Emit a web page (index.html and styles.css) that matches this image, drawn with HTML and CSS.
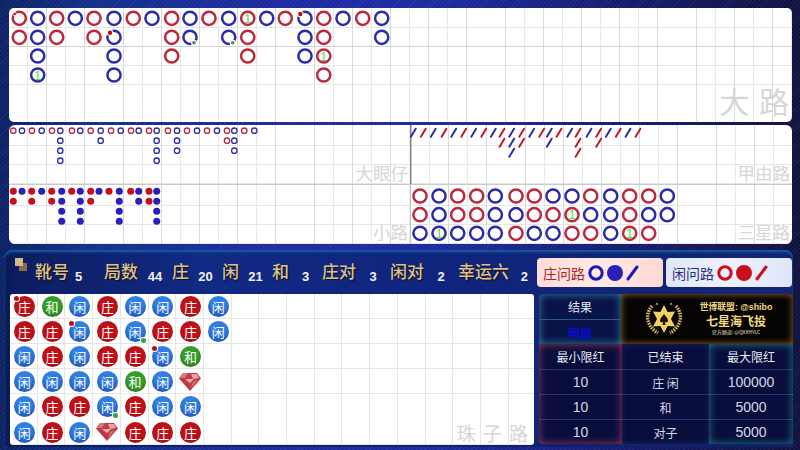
FILE: index.html
```html
<!DOCTYPE html>
<html>
<head>
<meta charset="UTF-8">
<meta name="viewport" content="width=device-width, initial-scale=1">
<title>路单</title>
<link rel="stylesheet" href="styles.css">
</head>
<body>

<svg class="defs" width="0" height="0">
	<defs>
		<circle id="r" class="ring red" r="6.6"/>
		<circle id="b" class="ring blue" r="6.6"/>
		<circle id="er" class="eye red" r="2.7"/>
		<circle id="eb" class="eye blue" r="2.7"/>
		<circle id="sr" class="spot red" r="3.5"/>
		<circle id="sb" class="spot blue" r="3.5"/>
		<line id="jr" class="slash red" x1="-2.4" y1="4" x2="2.4" y2="-4"/>
		<line id="jb" class="slash blue" x1="-2.4" y1="4" x2="2.4" y2="-4"/>
		<g id="gem">
			<polygon points="4,0 18,0 22,5.5 11,18 0,5.5" fill="#c03c48"/>
			<polygon points="4,0 9,0 6,5 1,5" fill="#d8787e"/>
			<polygon points="12,1 18,1 20,5 14,6" fill="#e6a4a6"/>
			<polygon points="6,6 15,6 11,10" fill="#e8b0b0"/>
			<polygon points="3,7 8,11 10,15" fill="#a92c3a"/>
			<polygon points="14,9 19,7 12,15" fill="#d87078"/>
		</g>
	</defs>
</svg>

<div class="big-road lines">
	<svg class="marks" viewBox="9 8 783 114" width="783" height="114">
		<use href="#r" x="19.3" y="18.3"/><use href="#b" x="37.7" y="18.3"/><use href="#r" x="56.7" y="18.3"/><use href="#b" x="75.3" y="18.3"/>
		<use href="#r" x="94" y="18.3"/><use href="#b" x="114" y="18.3"/><use href="#r" x="133.3" y="18.3"/><use href="#b" x="152" y="18.3"/>
		<use href="#r" x="171.7" y="18.3"/><use href="#b" x="190" y="18.3"/><use href="#r" x="209" y="18.3"/><use href="#b" x="228.7" y="18.3"/>
		<use href="#r" x="247.7" y="18.3"/><use href="#b" x="266.7" y="18.3"/><use href="#r" x="285.3" y="18.3"/><use href="#b" x="305" y="18.3"/>
		<use href="#r" x="323.7" y="18.3"/><use href="#b" x="343" y="18.3"/><use href="#r" x="362.7" y="18.3"/><use href="#b" x="381.7" y="18.3"/>

		<use href="#r" x="19.3" y="37.3"/><use href="#b" x="37.7" y="37.3"/><use href="#r" x="56.7" y="37.3"/><use href="#r" x="94" y="37.3"/>
		<use href="#b" x="114" y="37.3"/><use href="#r" x="171.7" y="37.3"/><use href="#b" x="190" y="37.3"/><use href="#b" x="228.7" y="37.3"/>
		<use href="#r" x="247.7" y="37.3"/><use href="#b" x="305" y="37.3"/><use href="#r" x="323.7" y="37.3"/><use href="#b" x="381.7" y="37.3"/>

		<use href="#b" x="37.7" y="56"/><use href="#b" x="114" y="56"/><use href="#r" x="171.7" y="56"/><use href="#r" x="247.7" y="56"/>
		<use href="#b" x="305" y="56"/><use href="#r" x="323.7" y="56"/>

		<use href="#b" x="37.7" y="75"/><use href="#b" x="114" y="75"/><use href="#r" x="323.7" y="75"/>

		<!-- pair markers cut a notch out of the ring -->
		<circle class="notch" cx="14.7" cy="14" r="2"/><circle class="pair-r" cx="14.7" cy="14" r="1.3"/>
		<circle class="notch" cx="110" cy="32.7" r="3.2"/><circle class="pair-r" cx="110" cy="32.7" r="2.2"/>
		<circle class="notch" cx="300.3" cy="14" r="3.2"/><circle class="pair-r" cx="300.3" cy="14" r="2.2"/>
		<circle class="notch" cx="194" cy="42.7" r="3"/><circle class="pair-g" cx="194" cy="42.7" r="1.8"/>
		<circle class="notch" cx="232.7" cy="42.7" r="3"/><circle class="pair-g" cx="232.7" cy="42.7" r="1.8"/>

		<text class="tie" x="247.7" y="23">1</text>
		<text class="tie" x="37.7" y="79.6">1</text>
		<text class="tie" x="323.7" y="60.6">1</text>
	</svg>
	<span class="wm wm-big">大 路</span>
</div>

<div class="mid">
	<div class="road lines">
		<svg class="marks" viewBox="9 125 401 59" width="401" height="59">
			<use href="#er" x="13.3" y="130.7"/><use href="#eb" x="22" y="130.7"/><use href="#er" x="32" y="130.7"/><use href="#eb" x="41.7" y="130.7"/>
			<use href="#er" x="52" y="130.7"/><use href="#eb" x="60.3" y="130.7"/><use href="#er" x="72" y="130.7"/><use href="#eb" x="80.3" y="130.7"/>
			<use href="#er" x="90.7" y="130.7"/><use href="#eb" x="100.7" y="130.7"/><use href="#er" x="111" y="130.7"/><use href="#eb" x="120.7" y="130.7"/>
			<use href="#er" x="131" y="130.7"/><use href="#eb" x="138.7" y="130.7"/><use href="#er" x="149" y="130.7"/><use href="#eb" x="156.7" y="130.7"/>
			<use href="#er" x="168" y="130.7"/><use href="#eb" x="177" y="130.7"/><use href="#er" x="187" y="130.7"/><use href="#eb" x="197" y="130.7"/>
			<use href="#er" x="207" y="130.7"/><use href="#eb" x="217" y="130.7"/><use href="#er" x="227" y="130.7"/><use href="#eb" x="234.3" y="130.7"/>
			<use href="#er" x="244.3" y="130.7"/><use href="#eb" x="254.3" y="130.7"/>

			<use href="#eb" x="60.3" y="140.7"/><use href="#eb" x="100.7" y="140.7"/><use href="#eb" x="156.7" y="140.7"/><use href="#eb" x="177" y="140.7"/>
			<use href="#er" x="227" y="140.7"/><use href="#eb" x="234.3" y="140.7"/>

			<use href="#eb" x="60.3" y="150.7"/><use href="#eb" x="156.7" y="150.7"/><use href="#eb" x="177" y="150.7"/><use href="#eb" x="234.3" y="150.7"/>

			<use href="#eb" x="60.3" y="160.7"/><use href="#eb" x="156.7" y="160.7"/>
		</svg>
		<span class="wm">大眼仔</span>
	</div>
	<div class="road lines shift divider">
		<svg class="marks" viewBox="410 125 382 59" width="382" height="59">
			<use href="#jb" x="413.3" y="132.7"/><use href="#jr" x="423.3" y="132.7"/><use href="#jb" x="433.3" y="132.7"/><use href="#jr" x="444" y="132.7"/>
			<use href="#jb" x="453.7" y="132.7"/><use href="#jr" x="463.7" y="132.7"/><use href="#jb" x="473.7" y="132.7"/><use href="#jr" x="483.7" y="132.7"/>
			<use href="#jb" x="493.3" y="132.7"/><use href="#jr" x="502" y="132.7"/><use href="#jb" x="511.7" y="132.7"/><use href="#jr" x="521.7" y="132.7"/>
			<use href="#jb" x="531.7" y="132.7"/><use href="#jr" x="541.7" y="132.7"/><use href="#jb" x="549.3" y="132.7"/><use href="#jr" x="559" y="132.7"/>
			<use href="#jb" x="569.7" y="132.7"/><use href="#jr" x="578" y="132.7"/><use href="#jb" x="589" y="132.7"/><use href="#jr" x="598.7" y="132.7"/>
			<use href="#jb" x="608.3" y="132.7"/><use href="#jr" x="618.3" y="132.7"/><use href="#jb" x="628" y="132.7"/><use href="#jr" x="638" y="132.7"/>

			<use href="#jr" x="502" y="142.7"/><use href="#jb" x="511.7" y="142.7"/><use href="#jr" x="521.7" y="142.7"/><use href="#jb" x="549.3" y="142.7"/>
			<use href="#jr" x="578" y="142.7"/><use href="#jr" x="598.7" y="142.7"/>

			<use href="#jb" x="511.7" y="152.7"/><use href="#jr" x="578" y="152.7"/>
		</svg>
		<span class="wm">甲由路</span>
	</div>
	<div class="road lines low">
		<svg class="marks" viewBox="9 185 401 59" width="401" height="59">
			<use href="#sr" x="13.3" y="191.3"/><use href="#sb" x="22" y="191.3"/><use href="#sr" x="31.7" y="191.3"/><use href="#sb" x="41.7" y="191.3"/>
			<use href="#sr" x="51.7" y="191.3"/><use href="#sb" x="61.7" y="191.3"/><use href="#sr" x="71.7" y="191.3"/><use href="#sb" x="80.3" y="191.3"/>
			<use href="#sr" x="90.7" y="191.3"/><use href="#sb" x="99" y="191.3"/><use href="#sr" x="109" y="191.3"/><use href="#sb" x="119.3" y="191.3"/>
			<use href="#sr" x="130.7" y="191.3"/><use href="#sb" x="138.7" y="191.3"/><use href="#sr" x="149" y="191.3"/><use href="#sb" x="156.7" y="191.3"/>

			<use href="#sr" x="13.3" y="201.3"/><use href="#sr" x="31.7" y="201.3"/><use href="#sr" x="51.7" y="201.3"/><use href="#sb" x="61.7" y="201.3"/>
			<use href="#sb" x="80.3" y="201.3"/><use href="#sr" x="90.7" y="201.3"/><use href="#sb" x="119.3" y="201.3"/><use href="#sb" x="138.7" y="201.3"/>
			<use href="#sr" x="149" y="201.3"/><use href="#sb" x="156.7" y="201.3"/>

			<use href="#sb" x="61.7" y="211.3"/><use href="#sb" x="80.3" y="211.3"/><use href="#sb" x="119.3" y="211.3"/><use href="#sb" x="156.7" y="211.3"/>
			<use href="#sb" x="61.7" y="221.3"/><use href="#sb" x="80.3" y="221.3"/><use href="#sb" x="119.3" y="221.3"/><use href="#sb" x="156.7" y="221.3"/>
		</svg>
		<span class="wm">小路</span>
	</div>
	<div class="road lines shift low divider-soft">
		<svg class="marks" viewBox="410 185 382 59" width="382" height="59">
			<use href="#r" x="420" y="196"/><use href="#b" x="439" y="196"/><use href="#r" x="457.7" y="196"/><use href="#r" x="476.7" y="196"/>
			<use href="#b" x="495.3" y="196"/><use href="#r" x="516" y="196"/><use href="#r" x="534.3" y="196"/><use href="#b" x="553" y="196"/>
			<use href="#b" x="572" y="196"/><use href="#r" x="590.7" y="196"/><use href="#b" x="610.7" y="196"/><use href="#r" x="629.7" y="196"/>
			<use href="#r" x="648.7" y="196"/><use href="#b" x="667.3" y="196"/>

			<use href="#r" x="420" y="214.7"/><use href="#b" x="439" y="214.7"/><use href="#r" x="457.7" y="214.7"/><use href="#r" x="476.7" y="214.7"/>
			<use href="#b" x="495.3" y="214.7"/><use href="#b" x="516" y="214.7"/><use href="#r" x="534.3" y="214.7"/><use href="#r" x="553" y="214.7"/>
			<use href="#r" x="572" y="214.7"/><use href="#b" x="590.7" y="214.7"/><use href="#b" x="610.7" y="214.7"/><use href="#r" x="629.7" y="214.7"/>
			<use href="#b" x="648.7" y="214.7"/><use href="#b" x="667.3" y="214.7"/>

			<use href="#b" x="420" y="233.3"/><use href="#b" x="439" y="233.3"/><use href="#b" x="457.7" y="233.3"/><use href="#b" x="476.7" y="233.3"/>
			<use href="#b" x="495.3" y="233.3"/><use href="#r" x="516" y="233.3"/><use href="#b" x="534.3" y="233.3"/><use href="#b" x="553" y="233.3"/>
			<use href="#r" x="572" y="233.3"/><use href="#r" x="590.7" y="233.3"/><use href="#b" x="610.7" y="233.3"/><use href="#r" x="629.7" y="233.3"/>
			<use href="#r" x="648.7" y="233.3"/>

			<text class="tie" x="572" y="219.3">1</text>
			<text class="tie" x="439" y="237.9">1</text>
			<text class="tie" x="629.7" y="237.9">1</text>
		</svg>
		<span class="wm">三星路</span>
	</div>
</div>

<div class="board">
	<div class="stats">
		<span class="corner-icon"></span>
		<div class="stat stat-first"><span class="label">靴号</span><span class="num">5</span></div>
		<div class="stat stat-two"><span class="label">局数</span><span class="num">44</span></div>
		<div class="stat stat-one"><span class="label">庄</span><span class="num">20</span></div>
		<div class="stat stat-one"><span class="label">闲</span><span class="num">21</span></div>
		<div class="stat stat-one"><span class="label">和</span><span class="num">3</span></div>
		<div class="stat stat-two"><span class="label">庄对</span><span class="num">3</span></div>
		<div class="stat stat-two"><span class="label">闲对</span><span class="num">2</span></div>
		<div class="stat stat-three"><span class="label">幸运六</span><span class="num">2</span></div>

		<div class="asks">
			<button class="ask ask-banker">庄问路
				<svg width="54" height="18" viewBox="0 0 54 18">
					<circle cx="9" cy="9" r="6.2" class="ask-ring blue"/>
					<circle cx="28" cy="9" r="8" class="spot blue"/>
					<line x1="41" y1="15" x2="50" y2="3" class="ask-slash blue"/>
				</svg>
			</button>
			<button class="ask ask-player">闲问路
				<svg width="54" height="18" viewBox="0 0 54 18">
					<circle cx="9" cy="9" r="6.2" class="ask-ring red"/>
					<circle cx="28" cy="9" r="8" class="spot red"/>
					<line x1="41" y1="15" x2="50" y2="3" class="ask-slash red"/>
				</svg>
			</button>
		</div>
	</div>

	<div class="board-body">
		<div class="beads">
			<span class="bead bead-r">庄<i class="dot dot-r"></i></span><span class="bead bead-r">庄</span><span class="bead bead-b">闲</span><span class="bead bead-b">闲</span><span class="bead bead-b">闲</span><span class="bead bead-b">闲</span>
			<span class="bead bead-g">和</span><span class="bead bead-r">庄</span><span class="bead bead-r">庄</span><span class="bead bead-b">闲</span><span class="bead bead-r">庄</span><span class="bead bead-r">庄</span>
			<span class="bead bead-b">闲</span><span class="bead bead-b">闲<i class="dot dot-r"></i></span><span class="bead bead-b">闲</span><span class="bead bead-b">闲</span><span class="bead bead-r">庄</span><span class="bead bead-b">闲</span>
			<span class="bead bead-r">庄</span><span class="bead bead-r">庄</span><span class="bead bead-r">庄</span><span class="bead bead-b">闲</span><span class="bead bead-b">闲<i class="dot dot-g"></i></span><svg class="gem" viewBox="0 0 22 18"><use href="#gem"/></svg>
			<span class="bead bead-b">闲</span><span class="bead bead-b">闲<i class="dot dot-g"></i></span><span class="bead bead-r">庄</span><span class="bead bead-g">和</span><span class="bead bead-r">庄</span><span class="bead bead-r">庄</span>
			<span class="bead bead-b">闲</span><span class="bead bead-r">庄</span><span class="bead bead-b">闲<i class="dot dot-r"></i></span><span class="bead bead-b">闲</span><span class="bead bead-b">闲</span><span class="bead bead-r">庄</span>
			<span class="bead bead-r">庄</span><span class="bead bead-r">庄</span><span class="bead bead-g">和</span><svg class="gem" viewBox="0 0 22 18"><use href="#gem"/></svg><span class="bead bead-b">闲</span><span class="bead bead-r">庄</span>
			<span class="bead bead-b">闲</span><span class="bead bead-b">闲</span>
			<span class="wm wm-bead">珠 子 路</span>
		</div>

		<div class="info">
			<div class="info-top">
				<div class="result">
					<div class="result-cell">结果</div>
					<div class="result-cell result-win">闲赢</div>
				</div>
				<div class="logo">
					<svg class="emblem" width="38" height="32" viewBox="0 0 38 32">
						<path class="wreath" d="M7 3 C0 11 1 23 13 30"/>
						<path class="wreath" d="M31 3 C38 11 37 23 25 30"/>
						<polygon class="star" points="19,2 22.6,9 30,8.5 26,16 30,23.5 22.6,23 19,30 15.4,23 8,23.5 12,16 8,8.5 15.4,9"/>
						<path d="M19 11 C21 14 23 15 23 17.5 C23 19.5 20.5 20 19.6 18.6 L20.6 22 L17.4 22 L18.4 18.6 C17.5 20 15 19.5 15 17.5 C15 15 17 14 19 11Z" fill="#1a1204"/>
						<circle class="star" cx="12" cy="0.9" r="0.9"/><circle class="star" cx="26" cy="0.9" r="0.9"/>
					</svg>
					<div class="logo-text">
						<div class="logo-line">世博联盟: @shibo</div>
						<div class="logo-name">七星海飞投</div>
						<div class="logo-small">官方频道: @QXXHYLC</div>
					</div>
				</div>
			</div>
			<div class="limits">
				<div class="col col-red">
					<div class="cell cell-head">最小限红</div>
					<div class="cell">10</div>
					<div class="cell">10</div>
					<div class="cell">10</div>
				</div>
				<div class="col col-blue">
					<div class="cell cell-head">已结束</div>
					<div class="cell cell-cn">庄 闲</div>
					<div class="cell cell-cn">和</div>
					<div class="cell cell-cn">对子</div>
				</div>
				<div class="col col-teal">
					<div class="cell cell-head">最大限红</div>
					<div class="cell">100000</div>
					<div class="cell">5000</div>
					<div class="cell">5000</div>
				</div>
			</div>
		</div>
	</div>
</div>

</body>
</html>
```

FILE: styles.css
```css
* {
	box-sizing: border-box;
}

html, body {
	height: 100%;
}

body {
	margin: 0;
	width: 800px;
	height: 450px;
	overflow: hidden;
	display: flex;
	flex-direction: column;
	font-family: "Noto Sans CJK SC", "Liberation Sans", sans-serif;
	background:
		repeating-linear-gradient(135deg, rgba(255,255,255,.05) 0 1px, transparent 1px 3px),
		linear-gradient(to right, #0d2265 0%, #12308a 12%, #1d2aa2 35%, #1c2aa0 55%, #141a68 80%, #10123f 100%);
}

.defs {
	position: absolute;
}

/* grid lines */
.lines {
	position: relative;
	background-color: #fff;
	background-image:
		repeating-linear-gradient(to right, transparent 0 37.2px, #dadada 37.2px 38.2px),
		repeating-linear-gradient(to right, transparent 0 18.1px, #e8e8e8 18.1px 19.1px),
		repeating-linear-gradient(to bottom, transparent 0 18.1px, #e6e6e6 18.1px 19.1px);
}

.big-road {
	flex: none;
	margin: 8px 8px 0 9px;
	height: 114px;
	border-radius: 5px;
	overflow: hidden;
	background-position: 0 0, 0 0, 0 0, 0 1px;
	background-image:
		linear-gradient(to bottom, transparent 38px, #d2d2d2 38px, #d2d2d2 39px, transparent 39px),
		repeating-linear-gradient(to right, transparent 0 37.2px, #dadada 37.2px 38.2px),
		repeating-linear-gradient(to right, transparent 0 18.1px, #e8e8e8 18.1px 19.1px),
		repeating-linear-gradient(to bottom, transparent 0 18.1px, #e6e6e6 18.1px 19.1px);
}

.mid {
	flex: none;
	margin: 3px 8px 0 9px;
	height: 119px;
	display: grid;
	grid-template-columns: 401px 382px;
	grid-template-rows: 59px 60px;
	border-radius: 6px;
	overflow: hidden;
}

.road {
	background-position: 0 0, 0 0, 0 2px;
}

.road.shift {
	background-position: 1px 0, 1px 0, 0 2px;
}

.road.low {
	border-top: 1px solid #c9c9c9;
	background-position: 0 0, 0 0, 0 2px;
}

.road.shift.low {
	background-position: 1px 0, 1px 0, 0 2px;
}

.divider {
	box-shadow: inset 1.5px 0 0 #858585;
}

.divider-soft {
	box-shadow: inset 1px 0 0 #c4c4c4;
}

.marks {
	display: block;
}

/* road marks */
.ring, .eye, .notch {
	fill: none;
}

.ring {
	stroke-width: 2.5;
}

.eye {
	stroke-width: 1.3;
}

.ring.red, .eye.red {
	stroke: #bb2a3c;
}

.ring.blue, .eye.blue {
	stroke: #2b2da8;
}

.spot.red {
	fill: #c6101c;
}

.spot.blue {
	fill: #2a1fb8;
}

.slash {
	stroke-width: 2;
	stroke-linecap: round;
}

.slash.red {
	stroke: #c2162a;
}

.slash.blue {
	stroke: #2b2db0;
}

.notch {
	fill: #fff;
}

.pair-r {
	fill: #c20a14;
}

.pair-g {
	fill: #3c9a32;
}

.tie {
	fill: #55dd4a;
	font-family: "Liberation Sans", sans-serif;
	font-size: 13px;
	text-anchor: middle;
}

/* watermarks */
.wm {
	position: absolute;
	right: 2px;
	bottom: -1px;
	font-size: 17.5px;
	color: #d6d6d6;
	line-height: 24px;
}

.road.low .wm {
	bottom: 0;
}

.wm-big {
	right: 3px;
	bottom: 4px;
	font-size: 30px;
	line-height: 36px;
	word-spacing: 3px;
}

.wm-bead {
	right: 6px;
	bottom: 0;
	font-size: 19px;
	word-spacing: 3px;
}

/* bottom board */
.board {
	flex: none;
	height: 197px;
	margin: 6px 7px 0 4px;
	padding-left: 6px;
	border-radius: 8px 8px 4px 4px;
	box-shadow: inset 0 2px 3px #1a62ad, inset 3px 0 5px #0b1a4c;
	background: linear-gradient(to right, #0c1c5e 0%, #112a84 25%, #10247c 60%, #122672 100%);
	display: flex;
	flex-direction: column;
}

.stats {
	flex: none;
	height: 44px;
	display: flex;
	align-items: center;
	padding-left: 4px;
}

.corner-icon {
	flex: none;
	width: 12px;
	height: 13px;
	margin-right: 8px;
	margin-top: -15px;
	margin-left: 1px;
	background:
		linear-gradient(#d8b888, #d8b888) 0 0 / 8px 8px no-repeat,
		linear-gradient(#8c6c48, #8c6c48) 100% 100% / 8px 8px no-repeat;
}

.stat {
	flex: none;
	display: flex;
	align-items: center;
}

.stat-first {
	width: 69px;
}

.stat-two {
	width: 68px;
}

.stat-one {
	width: 50px;
}

.stat-three {
	width: 72px;
}

.label {
	font-size: 17px;
	line-height: 24px;
	font-weight: 500;
	margin-top: -2px;
	color: #dcc196;
	text-shadow: 1px 1px 1px #1a1008;
}

.num {
	flex: 1;
	margin-top: 8px;
	text-align: center;
	font-family: "Liberation Sans", sans-serif;
	font-size: 13px;
	font-weight: bold;
	color: #f2f2f2;
}

.stat-first .num {
	text-align: left;
	margin-left: 6px;
}

.stat-three .num {
	text-align: right;
	padding-right: 2px;
}

.asks {
	margin-left: auto;
	display: flex;
	gap: 3px;
	margin-right: 1px;
	margin-top: 1px;
}

.ask {
	width: 126px;
	height: 29px;
	padding: 0 0 0 6px;
	border: 0;
	border-radius: 4px;
	display: flex;
	align-items: center;
	gap: 2px;
	font: 14px "Noto Sans CJK SC", sans-serif;
}

.ask-banker {
	color: #a8262e;
	background: linear-gradient(to right, #ffdcd8, #ffeae6 50%, #ffd8d4);
}

.ask-player {
	color: #2a2d78;
	background: linear-gradient(to right, #dfe6fb, #eef1fd 50%, #dfe6fb);
}

.ask-ring {
	fill: none;
	stroke-width: 3;
}

.ask-ring.red {
	stroke: #d00c18;
}

.ask-ring.blue {
	stroke: #1d18b8;
}

.ask-slash {
	stroke-width: 3;
	stroke-linecap: round;
}

.ask-slash.red {
	stroke: #d00c18;
}

.ask-slash.blue {
	stroke: #1d18b8;
}

.board-body {
	flex: 1;
	display: flex;
	gap: 5px;
}

/* bead road */
.beads {
	position: relative;
	width: 524px;
	height: 151px;
	padding-left: 0.5px;
	border-radius: 3px;
	display: grid;
	grid-auto-flow: column;
	grid-template-rows: repeat(6, 25.1px);
	grid-template-columns: repeat(8, 27.7px);
	justify-items: center;
	align-items: center;
	background-color: #fff;
	background-image:
		repeating-linear-gradient(to right, transparent 0 26.7px, #e6e6e6 26.7px 27.7px),
		repeating-linear-gradient(to bottom, transparent 0 24.1px, #e6e6e6 24.1px 25.1px);
}

.bead {
	position: relative;
	width: 21px;
	height: 21px;
	border-radius: 50%;
	display: flex;
	align-items: center;
	justify-content: center;
	font-size: 13px;
	line-height: 1;
	color: #fff;
}

.bead-r {
	background: radial-gradient(circle at 50% 38%, #bd1117 55%, #7c090d 100%);
}

.bead-b {
	background: radial-gradient(circle at 50% 30%, #2f7ee2 40%, #1a44a8 100%);
}

.bead-g {
	background: radial-gradient(circle at 50% 35%, #369c28 45%, #1e6c15 100%);
}

.dot {
	position: absolute;
	width: 5px;
	height: 5px;
	border-radius: 50%;
	box-shadow: 0 0 0 1px #fff;
}

.dot-r {
	left: 0;
	top: 0;
	background: #c20a14;
}

.dot-g {
	right: -0.5px;
	bottom: -0.5px;
	background: #3aa52e;
}

.gem {
	width: 22px;
	height: 18px;
}

/* info panel */
.info {
	flex: none;
	width: 254px;
	height: 150px;
	display: flex;
	flex-direction: column;
	color: #e4e8f2;
	font-size: 12px;
	border-radius: 4px;
	overflow: hidden;
	background: #090d3c;
}

.info-top {
	flex: none;
	height: 50px;
	display: flex;
}

.result {
	flex: none;
	width: 82px;
	box-shadow: inset 0 0 8px #2c88a6;
	background: #0a1348;
}

.result-cell {
	height: 25px;
	display: flex;
	align-items: center;
	justify-content: center;
}

.result-cell + .result-cell {
	border-top: 1px solid #2c5a86;
}

.result-win {
	color: #0a0ad6;
	font-weight: bold;
}

.logo {
	flex: 1;
	display: flex;
	align-items: center;
	padding-left: 24px;
	background: #050403;
	box-shadow: inset 0 0 7px #a06c22;
}

.emblem {
	flex: none;
	margin-right: 15px;
}

.wreath {
	fill: none;
	stroke: #d4b45c;
	stroke-width: 3.5;
	stroke-dasharray: 1.6 1;
}

.star {
	fill: #f0d064;
}

.logo-text {
	width: 76px;
	text-align: center;
	color: #f2d97e;
	line-height: 1;
}

.logo-line {
	font-size: 8.8px;
	font-family: "Liberation Sans", "Noto Sans CJK SC", sans-serif;
	font-weight: bold;
	line-height: 11px;
}

.logo-name {
	font-family: "Noto Sans CJK SC", serif;
	font-weight: bold;
	font-size: 12px;
	line-height: 15px;
}

.logo-small {
	font-size: 5px;
	line-height: 8px;
	color: #e8e2c0;
}

.limits {
	flex: 1;
	display: grid;
	grid-template-columns: 83px 87px 84px;
}

.col {
	display: flex;
	flex-direction: column;
}

.col-red {
	box-shadow: inset 0 0 8px #a03a58;
}

.col-blue {
	box-shadow: inset 0 0 6px #1c2468;
}

.col-teal {
	box-shadow: inset 0 0 8px #1e8480;
}

.cell {
	flex: 1;
	display: flex;
	align-items: center;
	justify-content: center;
	font-family: "Liberation Sans", "Noto Sans CJK SC", sans-serif;
	font-size: 14px;
	color: #d4d8e6;
	border-top: 1px solid rgba(90,110,180,.4);
}

.cell-head {
	flex: 1.05;
	border-top: 0;
	font-family: "Noto Sans CJK SC", sans-serif;
	font-size: 12px;
	color: #e8ecf4;
}

.cell-cn {
	font-family: "Noto Sans CJK SC", sans-serif;
	font-size: 12px;
}
```
